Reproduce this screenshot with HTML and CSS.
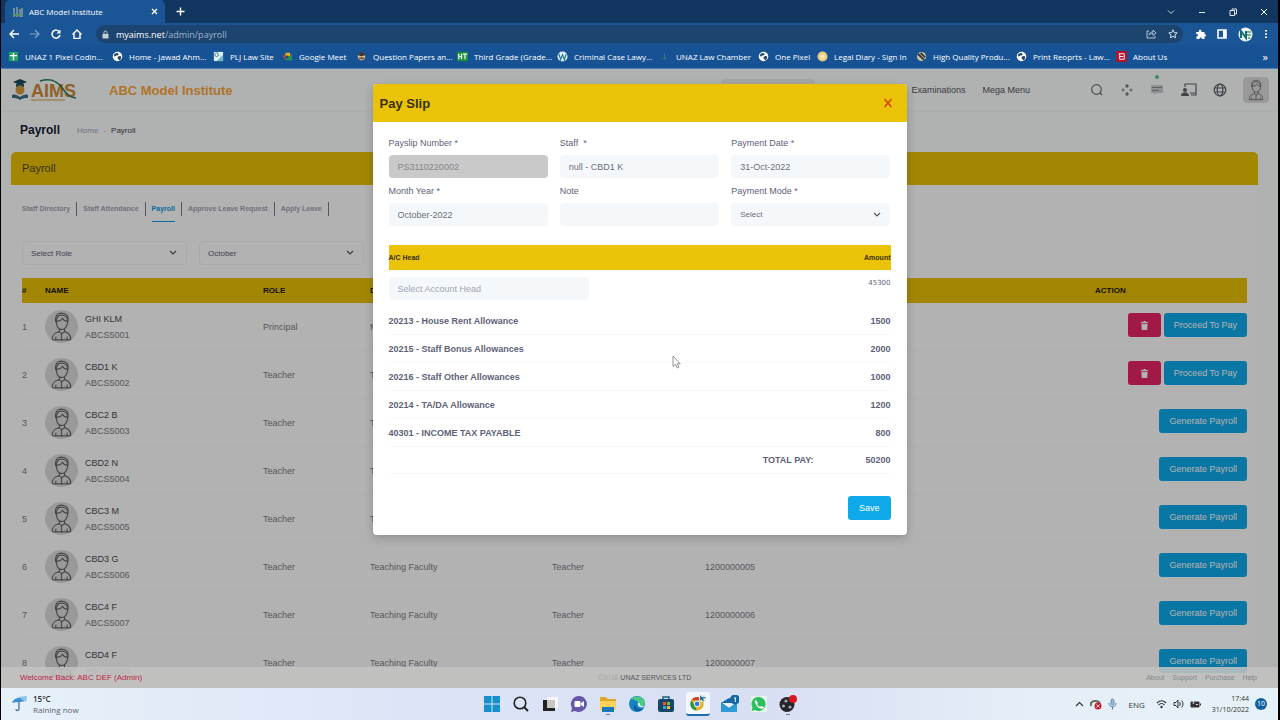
FILE: index.html
```html
<!DOCTYPE html>
<html lang="en">
  <head>
    <meta charset="utf-8">
    <title>ABC Model Institute</title>
    <link rel="stylesheet" href="styles.css">
  </head>
  <body>
    <svg class="defs" aria-hidden="true">
      <symbol id="person" viewBox="0 0 32 32">
        <g fill="none" stroke="#666" stroke-width="1.100" stroke-linejoin="round">
          <path d="M11 11c0-4 2-6 5-6s6 2 6 6c0 5-3 8-6 8s-5-3-5-8z"/>
          <path d="M10.500 12c-1.500-5 1-9 5.500-9s7.500 3 6 9M11 11c3 0 5-1 6-3 1 2 3 3 5 3"/>
          <path d="M14 18v3l2 2 3-2v-3M7 29c0-5 2-7 7-8M25 29c0-5-2-7-6-8M7 29h18M16 23v6M10.500 29v-3M21.500 29v-3"/>
        </g>
      </symbol>
      <symbol id="trash" viewBox="0 0 10 10">
        <path fill="#fff" d="M1 1h2.500l.5-1h2l.5 1h2.500v1.200h-8zM1.500 3h7l-.5 7h-6z"/>
      </symbol>
      <symbol id="globe" viewBox="0 0 12 12">
        <circle cx="6" cy="6" r="5.200" fill="#fff"/>
        <path fill="#24466e" d="M3 3c2-1 3-1 4 0s-1 2-2 2-1 1-2 1-1-2 0-3zM7 6c2-1 3 0 3 1s-1 3-2 3-1-2-2-2 0-1 1-2z"/>
      </symbol>
    </svg>

    <header class="browser">
      <div class="tabstrip">
        <div class="tab">
          <svg width="12" height="12" viewBox="0 0 12 12"><path d="M2 2v9M5 1v10M8 3v8M10 2v9" stroke="#8c9aa0" stroke-width="1.500"/><path d="M1 9h10" stroke="#5c8f6b" stroke-width="2"/></svg>
          <span>ABC Model Institute</span>
          <button class="plain" aria-label="Close tab"><svg width="7" height="7" viewBox="0 0 7 7"><path d="M1 1l5 5M6 1l-5 5" stroke="#fff" stroke-width="1.300"/></svg></button>
        </div>
        <button class="plain" aria-label="New tab"><svg width="9" height="9" viewBox="0 0 9 9"><path d="M4.500 0.500v8M0.500 4.500h8" stroke="#fff" stroke-width="1.400"/></svg></button>
        <div class="window-buttons">
          <button class="plain" aria-label="Search tabs"><svg width="8" height="8" viewBox="0 0 8 8"><path d="M1 2.500l3 3 3-3" fill="none" stroke="#c3d3e4"/></svg></button>
          <button class="plain" aria-label="Minimize"><svg width="8" height="8" viewBox="0 0 8 8"><path d="M1 4.500h6" stroke="#dfe8f2"/></svg></button>
          <button class="plain" aria-label="Restore"><svg width="8" height="8" viewBox="0 0 8 8"><path d="M1 2.500h4.500v5h-4.500zM3 2.500v-1.500h4.500v5h-2" fill="none" stroke="#dfe8f2"/></svg></button>
          <button class="plain" aria-label="Close"><svg width="8" height="8" viewBox="0 0 8 8"><path d="M1 1l6 6M7 1l-6 6" stroke="#fff"/></svg></button>
        </div>
      </div>

      <div class="toolbar">
        <div class="nav-buttons">
          <button class="plain" aria-label="Back"><svg width="10" height="10" viewBox="0 0 10 10"><path d="M5 1l-4 4 4 4M1 5h9" fill="none" stroke="#fff" stroke-width="1.400"/></svg></button>
          <button class="plain" aria-label="Forward"><svg width="10" height="10" viewBox="0 0 10 10"><path d="M5 1l4 4-4 4M9 5h-9" fill="none" stroke="#7fa5cf" stroke-width="1.200"/></svg></button>
          <button class="plain" aria-label="Reload"><svg width="10" height="10" viewBox="0 0 10 10"><path d="M8.500 3a4 4 0 1 0 .5 3" fill="none" stroke="#fff" stroke-width="1.500"/><path d="M9.500 0.500v4h-4z" fill="#fff"/></svg></button>
          <button class="plain" aria-label="Home"><svg width="10" height="10" viewBox="0 0 10 10"><path d="M0.500 5.500L5 1l4.500 4.500M2 4.500v5h6v-5" fill="none" stroke="#fff" stroke-width="1.400"/></svg></button>
        </div>
        <div class="omnibox">
          <svg width="7" height="9" viewBox="0 0 7 9"><path d="M0.500 4h6v4.500h-6z" fill="#c4cfdc"/><path d="M2 4v-1.500a1.500 1.500 0 0 1 3 0v1.500" fill="none" stroke="#c4cfdc"/></svg>
          <span class="url">myaims.net<span>/admin/payroll</span></span>
          <svg width="11" height="10" viewBox="0 0 11 10"><path d="M3 2h-2v7h8v-2M3 6c0-2 2-3 4-3v-2l3 3-3 2.500v-2c-2 0-3 .5-4 1.500z" fill="none" stroke="#b5c5d8"/></svg>
          <svg width="10" height="10" viewBox="0 0 10 10"><path d="M5 .8l1.200 2.800 3 .3-2.300 2 .7 3-2.600-1.600-2.600 1.600.7-3-2.300-2 3-.3z" fill="none" stroke="#d5deea"/></svg>
        </div>
        <div class="extensions">
          <svg width="10" height="10" viewBox="0 0 10 10"><path d="M0 3h3c-.8-3 3-3 2.500 0h3v2.300c2-.5 2 2.700 0 2.300v2.400h-2.700c.4-2-2.600-2-2.200 0h-3.100v-2.500c2 .3 2-2.600 0-2.200z" fill="#fff"/></svg>
          <svg width="10" height="10" viewBox="0 0 10 10"><path d="M1 1h8v8h-8z" fill="none" stroke="#fff" stroke-width="1.600"/><path d="M6 1h3v8h-3z" fill="#fff"/></svg>
          <svg width="15" height="15" viewBox="0 0 15 15"><circle cx="7.500" cy="7.500" r="7" fill="#e8f3f1"/><path d="M3 11v-7l5 7v-7" fill="none" stroke="#176b78" stroke-width="2"/><path d="M9 5h4M9 8h4M10 11h2" stroke="#4d9c66" stroke-width="1.500"/></svg>
          <svg width="4" height="10" viewBox="0 0 4 10"><path d="M1 1h2v1.500h-2zM1 4.300h2v1.500h-2zM1 7.500h2v1.500h-2z" fill="#fff"/></svg>
        </div>
      </div>

      <nav class="bookmarks">
        <a href="#"><svg viewBox="0 0 12 12"><path d="M1 1h10v10h-10z" fill="#1fa363"/><path d="M6 2v8M2 5h8" stroke="#fff" stroke-width="1.500"/></svg>UNAZ 1 Pixel Codin...</a>
        <a href="#"><svg><use href="#globe"/></svg>Home - Jawad Ahm...</a>
        <a href="#"><svg viewBox="0 0 12 12"><path d="M1 1h10v10h-10z" fill="#e4f2f5"/><circle cx="4" cy="4" r="2" fill="none" stroke="#29798f"/><path d="M4 11l7-7v7z" fill="#71bbc9"/></svg>PLJ Law Site</a>
        <a href="#"><svg viewBox="0 0 12 12"><path d="M1 6l3-4v8z" fill="#c8442e"/><path d="M4 2h5v4h-5z" fill="#e2b52a"/><path d="M4 6h5l2-3v7h-7z" fill="#259350"/><path d="M4 5h3v3h-3z" fill="#175394"/></svg>Google Meet</a>
        <a href="#"><svg viewBox="0 0 12 12"><circle cx="6" cy="6" r="4" fill="#d8c9a4"/><path d="M1 4l5-3 5 3-5 2z" fill="#3b3a38"/><path d="M3 8h6" stroke="#6d4f2e" stroke-width="2"/></svg>Question Papers an...</a>
        <a href="#"><svg viewBox="0 0 12 12"><path d="M0 1h12v10h-12z" fill="#18913b"/><path d="M2 3v6M5 3v6M2 6h3M6.500 3.500h4.500M8.700 3v6" stroke="#fff" stroke-width="1.300"/></svg>Third Grade (Grade...</a>
        <a href="#"><svg viewBox="0 0 12 12"><circle cx="6" cy="6" r="5.500" fill="#dff1f4"/><path d="M2 3l2 6.500 2-5.500 2 5.500 2-6" fill="none" stroke="#287694" stroke-width="1.300"/></svg>Criminal Case Lawy...</a>
        <a href="#"><svg viewBox="0 0 12 12"><path d="M6 3v6M4 8h4" stroke="#496f86"/></svg>UNAZ Law Chamber</a>
        <a href="#"><svg><use href="#globe"/></svg>One Pixel</a>
        <a href="#"><svg viewBox="0 0 12 12"><circle cx="6" cy="6" r="5.500" fill="#eccd7c"/><circle cx="6" cy="6" r="2.500" fill="#f7e9bc"/></svg>Legal Diary - Sign In</a>
        <a href="#"><svg viewBox="0 0 12 12"><circle cx="6" cy="6" r="5" fill="#c7c0a7"/><path d="M2 3l7 7M5 2l5 5" stroke="#33383b" stroke-width="2"/></svg>High Quality Produ...</a>
        <a href="#"><svg><use href="#globe"/></svg>Print Reoprts - Law...</a>
        <a href="#"><svg viewBox="0 0 12 12"><path d="M0 0h12v12h-12z" fill="#b3122c"/><path d="M3 3h6v6M4 9v-6M4 6h4M4 9h5" fill="none" stroke="#fff"/></svg>About Us</a>
        <span class="more">»</span>
      </nav>
    </header>

    <div class="viewport">
      <header class="site-header">
        <svg class="logo" width="68" height="24" viewBox="0 0 68 24">
          <path d="M2 4l7-3 7 3-7 3z" fill="#184b58"/><path d="M5 6v3h8v-3" fill="#235f6b"/>
          <circle cx="9" cy="12" r="4.500" fill="#d69a3c"/>
          <path d="M1 17c3-1 5 0 8 2 3-2 5-3 8-2v3c-3 0-5 0-8 2-3-2-5-2-8-2z" fill="#3d6f86"/>
          <text x="20" y="19" class="logo-text">AIMS</text>
          <path d="M29 3c13-4 19 2 23 8s7 8 13 9" fill="none" stroke="#2f7d52" stroke-width="1.500"/>
          <path d="M20 22h34" stroke="#d6a04a"/>
        </svg>
        <a class="school" href="#">ABC Model Institute</a>
        <nav class="main-menu">
          <a class="current" href="#">Human Resource</a>
          <a href="#">Communication</a>
          <a href="#">Examinations</a>
          <a href="#">Mega Menu</a>
        </nav>
        <div class="tools">
          <button class="plain" aria-label="Search"><svg width="14" height="14" viewBox="0 0 14 14"><circle cx="6.500" cy="6.500" r="4.800" fill="none" stroke="#6e7178" stroke-width="1.200"/><path d="M10 10l2 2" stroke="#6e7178" stroke-width="1.200"/></svg></button>
          <button class="plain" aria-label="Apps"><svg width="14" height="14" viewBox="0 0 14 14" fill="#777b83"><circle cx="7" cy="3" r="1.700"/><circle cx="7" cy="11" r="1.700"/><circle cx="3" cy="7" r="1.500" fill="#9b9ea6"/><circle cx="11" cy="7" r="1.500" fill="#9b9ea6"/></svg></button>
          <button class="plain notices" aria-label="Notices"><svg width="14" height="14" viewBox="0 0 14 14"><path d="M1 2h12v8h-7l-2 2v-2h-3z" fill="#cdced3"/><path d="M2 4.500h10M2 7.500h7" stroke="#85888f"/></svg></button>
          <button class="plain" aria-label="Classroom"><svg width="17" height="14" viewBox="0 0 17 14"><path d="M5 4v-3h11v9h-6M11 12h5v-3" fill="none" stroke="#60636c" stroke-width="1.200"/><circle cx="5" cy="7" r="2" fill="#60636c"/><path d="M1 13c0-5 8-5 8 0z" fill="#60636c"/></svg></button>
          <button class="plain" aria-label="Language"><svg width="14" height="14" viewBox="0 0 14 14"><g fill="none" stroke="#60636c" stroke-width="1.200"><circle cx="7" cy="7" r="5.800"/><ellipse cx="7" cy="7" rx="2.800" ry="5.800"/><path d="M1.500 5h11M1.500 9h11"/></g></svg></button>
          <button class="plain profile" aria-label="Profile"><svg width="24" height="24"><use href="#person"/></svg></button>
        </div>
      </header>

      <main>
        <div class="page-title">
          <h1>Payroll</h1>
          <a href="#">Home</a>
          <span class="dash">-</span>
          <span>Payroll</span>
        </div>

        <section class="card">
          <h2>Payroll</h2>
          <div class="card-body">
            <ul class="tabs">
              <li><a href="#">Staff Directory</a></li>
              <li><a href="#">Staff Attendance</a></li>
              <li><a class="active" href="#">Payroll</a></li>
              <li><a href="#">Approve Leave Request</a></li>
              <li><a href="#">Apply Leave</a></li>
            </ul>
            <form class="filters">
              <select aria-label="Role"><option>Select Role</option></select>
              <select aria-label="Month"><option>October</option></select>
            </form>
            <table class="staff">
              <thead>
                <tr>
                  <th class="col-no">#</th>
                  <th class="col-name">NAME</th>
                  <th class="col-role">ROLE</th>
                  <th class="col-dept">DEPARTMENT</th>
                  <th class="col-desig">DESIGNATION</th>
                  <th>PHONE</th>
                  <th class="col-action">ACTION</th>
                </tr>
              </thead>
              <tbody>
                <tr>
                  <td>1</td>
                  <td><div class="person"><svg><use href="#person"/></svg><div><b>GHI KLM</b><span>ABCS5001</span></div></div></td>
                  <td>Principal</td><td>Management</td><td>Principal</td><td>1200000000</td>
                  <td class="actions"><button class="btn danger" aria-label="Delete"><svg width="9" height="9"><use href="#trash"/></svg></button> <button class="btn">Proceed To Pay</button></td>
                </tr>
                <tr>
                  <td>2</td>
                  <td><div class="person"><svg><use href="#person"/></svg><div><b>CBD1 K</b><span>ABCS5002</span></div></div></td>
                  <td>Teacher</td><td>Teaching Faculty</td><td>Teacher</td><td>1200000001</td>
                  <td class="actions"><button class="btn danger" aria-label="Delete"><svg width="9" height="9"><use href="#trash"/></svg></button> <button class="btn">Proceed To Pay</button></td>
                </tr>
                <tr>
                  <td>3</td>
                  <td><div class="person"><svg><use href="#person"/></svg><div><b>CBC2 B</b><span>ABCS5003</span></div></div></td>
                  <td>Teacher</td><td>Teaching Faculty</td><td>Teacher</td><td>1200000002</td>
                  <td class="actions"><button class="btn">Generate Payroll</button></td>
                </tr>
                <tr>
                  <td>4</td>
                  <td><div class="person"><svg><use href="#person"/></svg><div><b>CBD2 N</b><span>ABCS5004</span></div></div></td>
                  <td>Teacher</td><td>Teaching Faculty</td><td>Teacher</td><td>1200000003</td>
                  <td class="actions"><button class="btn">Generate Payroll</button></td>
                </tr>
                <tr>
                  <td>5</td>
                  <td><div class="person"><svg><use href="#person"/></svg><div><b>CBC3 M</b><span>ABCS5005</span></div></div></td>
                  <td>Teacher</td><td>Teaching Faculty</td><td>Teacher</td><td>1200000004</td>
                  <td class="actions"><button class="btn">Generate Payroll</button></td>
                </tr>
                <tr>
                  <td>6</td>
                  <td><div class="person"><svg><use href="#person"/></svg><div><b>CBD3 G</b><span>ABCS5006</span></div></div></td>
                  <td>Teacher</td><td>Teaching Faculty</td><td>Teacher</td><td>1200000005</td>
                  <td class="actions"><button class="btn">Generate Payroll</button></td>
                </tr>
                <tr>
                  <td>7</td>
                  <td><div class="person"><svg><use href="#person"/></svg><div><b>CBC4 F</b><span>ABCS5007</span></div></div></td>
                  <td>Teacher</td><td>Teaching Faculty</td><td>Teacher</td><td>1200000006</td>
                  <td class="actions"><button class="btn">Generate Payroll</button></td>
                </tr>
                <tr>
                  <td>8</td>
                  <td><div class="person"><svg><use href="#person"/></svg><div><b>CBD4 F</b><span>ABCS5008</span></div></div></td>
                  <td>Teacher</td><td>Teaching Faculty</td><td>Teacher</td><td>1200000007</td>
                  <td class="actions"><button class="btn">Generate Payroll</button></td>
                </tr>
              </tbody>
            </table>
          </div>
        </section>
      </main>

      <div class="backdrop">
        <div class="modal" role="dialog" aria-labelledby="slip-title">
          <div class="modal-header">
            <h2 id="slip-title">Pay Slip</h2>
            <button class="plain" aria-label="Close"><svg width="10" height="10" viewBox="0 0 10 10"><path d="M1.500 1l7 8M8.500 1l-7 8" stroke="#d8420f" stroke-width="1.500"/></svg></button>
          </div>
          <form class="modal-body">
            <div class="fields">
              <div class="field"><label for="slip-no">Payslip Number <i>*</i></label><input id="slip-no" value="PS3110220002" readonly></div>
              <div class="field"><label for="staff">Staff &nbsp;<i>*</i></label><input id="staff" value="null - CBD1 K"></div>
              <div class="field"><label for="pay-date">Payment Date <i>*</i></label><input id="pay-date" value="31-Oct-2022"></div>
              <div class="field"><label for="month">Month Year <i>*</i></label><input id="month" value="October-2022"></div>
              <div class="field"><label for="note">Note</label><input id="note"></div>
              <div class="field"><label for="mode">Payment Mode <i>*</i></label><select id="mode"><option>Select</option></select></div>
            </div>
            <table class="heads">
              <thead>
                <tr><th>A/C Head</th><th class="amount">Amount</th></tr>
              </thead>
              <tbody>
                <tr class="add"><td><input aria-label="Account head" placeholder="Select Account Head"></td><td>45300</td></tr>
                <tr><td>20213 - House Rent Allowance</td><td>1500</td></tr>
                <tr><td>20215 - Staff Bonus Allowances</td><td>2000</td></tr>
                <tr><td>20216 - Staff Other Allowances</td><td>1000</td></tr>
                <tr><td>20214 - TA/DA Allowance</td><td>1200</td></tr>
                <tr><td>40301 - INCOME TAX PAYABLE</td><td>800</td></tr>
              </tbody>
              <tfoot>
                <tr><td>TOTAL PAY:</td><td>50200</td></tr>
              </tfoot>
            </table>
            <button class="btn save" type="button">Save</button>
          </form>
        </div>
      </div>

      <footer class="site-footer">
        <span class="welcome">Welcome Back: ABC DEF (Admin)</span>
        <span class="copy"><span>©2018</span> UNAZ SERVICES LTD</span>
        <nav><a href="#">About</a><a href="#">Support</a><a href="#">Purchase</a><a href="#">Help</a></nav>
      </footer>

      <svg class="cursor" width="9" height="14" viewBox="0 0 9 14"><path d="M1 1v10.500l2.500-2.200 1.700 3.700 1.700-.8-1.700-3.500h3z" fill="#fff" stroke="#777" stroke-width=".8"/></svg>
    </div>

    <footer class="taskbar">
      <div class="weather">
        <svg width="16" height="18" viewBox="0 0 16 18"><path d="M0 8c1-5 10-8 15-3-3 1-5 2-7 2s-5 0-8 1z" fill="#3f8fd2"/><path d="M6 2l9-1-1 6z" fill="#8cc3ea"/><path d="M7 6v8c0 2-3 2-3 0" fill="none" stroke="#47729b" stroke-width="1.300"/></svg>
        <div><b>15°C</b><span>Raining now</span></div>
      </div>
      <div class="apps">
        <svg viewBox="0 0 18 18"><path d="M1 1h7.500v7.500h-7.500zM9.500 1h7.500v7.500h-7.500zM1 9.500h7.500v7.500h-7.500zM9.500 9.500h7.500v7.500h-7.500z" fill="#168fcb"/></svg>
        <svg viewBox="0 0 18 18"><circle cx="8" cy="8" r="5.800" fill="none" stroke="#222" stroke-width="1.600"/><path d="M12 12l4 4" stroke="#222" stroke-width="2"/></svg>
        <svg viewBox="0 0 18 18"><path d="M6 2h11v11h-11z" fill="#f6f6f6"/><path d="M2 5h4v8h8v3h-12z" fill="#222"/><path d="M6 5h8v8h-8z" fill="#c6c6c6"/></svg>
        <svg viewBox="0 0 18 18"><path d="M9 1a8 8 0 1 1-4 15l-4 1 1-4a8 8 0 0 1 7-12z" fill="#6558a8"/><rect x="4.500" y="6" width="6" height="6" rx="1" fill="#fff"/><path d="M11 8l3-2v6l-3-2z" fill="#fff"/></svg>
        <svg class="running" viewBox="0 0 18 18"><path d="M1 2h6l2 2h8v11h-16z" fill="#e0a72d"/><path d="M1 6h16v9h-16z" fill="#f9d25a"/><path d="M3 12h12v5h-12z" fill="#1878be"/></svg>
        <svg viewBox="0 0 18 18"><circle cx="9" cy="9" r="8" fill="#1684c3"/><path d="M3 4c5-5 14-2 14 4 0 4-5 4-7 3 2-3-1-6-7-7z" fill="#4bcb87"/><path d="M8 8c-2 3 1 7 7 6-4 4-11 2-9-3z" fill="#0f5ca3"/><path d="M10 8c-1 3 2 5 6 4l1-1c-4 1-6-1-5-3z" fill="#e8f4f8"/></svg>
        <svg viewBox="0 0 18 18"><path d="M6 4v-2h6v2" fill="none" stroke="#1d5d7e" stroke-width="1.500"/><rect x="1" y="4" width="16" height="13" rx="2" fill="#174767"/><path d="M6 7h3v3h-3z" fill="#e75735"/><path d="M10 7h3v3h-3z" fill="#7bbd3c"/><path d="M6 11h3v3h-3z" fill="#33a3dc"/><path d="M10 11h3v3h-3z" fill="#f2bf33"/></svg>
        <svg class="focused" viewBox="0 0 18 18"><circle cx="8" cy="10" r="7.500" fill="#e5b52d"/><path d="M1.500 6a7.500 7.500 0 0 1 13 0h-6.500z" fill="#d43d31"/><path d="M1.500 6l4 6 2 5.500a7.500 7.500 0 0 1-6-11.500z" fill="#279750"/><circle cx="8" cy="10" r="3.500" fill="#fff"/><circle cx="8" cy="10" r="2.600" fill="#3279c9"/><circle cx="14" cy="4" r="4" fill="#d8eeee"/><path d="M12 6v-4l2.500 4v-4M15.500 3h2" fill="none" stroke="#125d71" stroke-width="1.200"/></svg>
        <svg viewBox="0 0 18 18"><path d="M0 8l8-5 8 5v9h-16z" fill="#1269aa"/><path d="M1 8h14l-7 5z" fill="#eaf5fb"/><path d="M0 8l8 5 8-5v9h-16z" fill="#2c9bd8"/><circle cx="14" cy="4.500" r="5" fill="#1468a0"/><path d="M13 3.500l1.300-1v4.500" fill="none" stroke="#fff"/></svg>
        <svg viewBox="0 0 18 18"><path d="M1 1h16v16h-16z" fill="#e6f5eb"/><path d="M9 2a7 7 0 1 1-4 13l-3.500 1 1-3.500a7 7 0 0 1 6.500-10.500z" fill="#2fbe5e"/><path d="M6 5l2 3-1 1c1 2 2 2 3 3l1-1 3 1c-1 3-5 2-7-1s-3-5-1-6z" fill="#fff"/></svg>
        <svg class="running" viewBox="0 0 18 18"><circle cx="8" cy="9.500" r="7.500" fill="#24252a"/><circle cx="7" cy="6" r="1.600" fill="#a9a9ad"/><circle cx="4.500" cy="11" r="1.600" fill="#a9a9ad"/><circle cx="11" cy="12" r="1.600" fill="#a9a9ad"/><circle cx="14" cy="4" r="4" fill="#dd1420"/></svg>
      </div>
      <div class="tray">
        <svg width="9" height="9" viewBox="0 0 9 9"><path d="M1 6l3.500-3.500L8 6" fill="none" stroke="#333" stroke-width="1.200"/></svg>
        <svg width="12" height="12" viewBox="0 0 12 12"><path d="M1 8c-1-3 1-5 4-5s5 1 5 4" fill="none" stroke="#666" stroke-width="2"/><circle cx="8" cy="8" r="3.500" fill="#c9202e"/><path d="M6.500 6.500l3 3M9.500 6.500l-3 3" stroke="#fff" stroke-width=".8"/></svg>
        <svg width="9" height="12" viewBox="0 0 9 12"><rect x="3" y="1" width="3" height="6" rx="1.500" fill="#9cb8dc" stroke="#58779f" stroke-width=".8"/><path d="M1 5c0 5 7 5 7 0M4.500 9v2.500" fill="none" stroke="#58779f"/></svg>
        <span class="lang">ENG</span>
        <svg width="11" height="10" viewBox="0 0 11 10"><path d="M1 4c3-3 6-3 9 0M2.500 6c2-2 4-2 6 0" fill="none" stroke="#333" stroke-width="1.100"/><circle cx="5.500" cy="8" r="1.200" fill="#333"/></svg>
        <svg width="11" height="10" viewBox="0 0 11 10"><path d="M1 3.500h2l2-2.500v8l-2-2.500h-2zM6.500 3c1 1 1 3 0 4M8.500 1.500c2 2 2 5 0 7" fill="none" stroke="#333"/></svg>
        <svg width="11" height="10" viewBox="0 0 11 10"><path d="M1 3h8v5h-8zM10.500 4.500v2" fill="#333" stroke="#333"/><path d="M1 1l3 2-1 2M6 5.500h2" stroke="#dfe8f2" fill="none"/></svg>
        <div class="clock"><span>17:44</span><span>31/10/2022</span></div>
        <span class="count">10</span>
      </div>
    </footer>
  </body>
</html>
```
FILE: styles.css
```css
*{
    box-sizing: border-box;
}
body{
    display: flex;
    flex-direction: column;
    height: 100vh;
    margin: 0;
    border-left: 1px solid #000;
    border-right: 2px solid #000;
    font-family: "Liberation Sans", Arial, sans-serif;
    font-size: 9px;
    overflow: hidden;
}
a{
    color: inherit;
    text-decoration: none;
}
h1, h2{
    margin: 0;
}
svg{
    flex: none;
}
button, input, select{
    font: inherit;
}
.defs{
    position: absolute;
    width: 0;
    height: 0;
}
.plain{
    display: flex;
    padding: 0;
    border: 0;
    background: none;
}

/* browser window */
.browser{
    flex: none;
    color: #fff;
    font-family: "Open Sans", "Noto Sans", sans-serif;
    background: #175394;
}
.tabstrip{
    display: flex;
    align-items: center;
    gap: 11px;
    height: 23px;
    padding-left: 4px;
    background: #12365f;
}
.tab{
    display: flex;
    align-items: center;
    gap: 5px;
    width: 160px;
    height: 23px;
    padding: 0 7px;
    border-radius: 5px 5px 0 0;
    font-size: 8px;
    background: #1a5596;
}
.tab span{
    flex: 1;
}
.window-buttons{
    display: flex;
    gap: 23px;
    margin-left: auto;
    padding-right: 10px;
}
.toolbar{
    display: flex;
    align-items: center;
    height: 22px;
    padding: 0 10px 0 8px;
    background: #1a5596;
}
.nav-buttons{
    display: flex;
    gap: 11px;
}
.omnibox{
    display: flex;
    flex: 1;
    align-items: center;
    gap: 11px;
    height: 18px;
    margin: 0 13px 0 14px;
    padding: 0 5px 0 6px;
    border-radius: 9px;
    background: #1d446f;
}
.url{
    flex: 1;
    margin-left: -4px;
    font-size: 9px;
}
.url span{
    color: #9fb4cc;
}
.extensions{
    display: flex;
    align-items: center;
    gap: 11px;
}
.bookmarks{
    display: grid;
    grid-template-columns: 104px 101px 69px 74px 101px 100px 102px 99px 59px 99px 100px 100px 1fr auto;
    align-items: center;
    height: 24px;
    padding: 0 10px 0 7px;
    font-size: 8px;
    white-space: nowrap;
    border-bottom: 1px solid #4f80b3;
}
.bookmarks a{
    display: flex;
    align-items: center;
    gap: 6px;
}
.bookmarks svg{
    width: 11px;
    height: 11px;
}
.more{
    font-size: 11px;
}

/* payroll page */
.viewport{
    position: relative;
    flex: 1;
    min-height: 0;
    overflow: hidden;
    color: #7b7d87;
    background: #fcfefe;
}
.site-header{
    display: flex;
    align-items: center;
    height: 43px;
    padding: 0 9px 0 10px;
    border-bottom: 1px solid #f6f6f6;
}
.logo-text{
    font-size: 18px;
    font-weight: bold;
    fill: #cf8a35;
}
.school{
    margin-left: 30px;
    font-size: 13px;
    font-weight: bold;
    color: #fca63a;
}
.main-menu{
    display: flex;
    align-items: center;
    gap: 17px;
    margin-left: auto;
    color: #54565e;
}
.main-menu .current{
    padding: 6px 12px;
    border-radius: 4px;
    background: #eee;
}
.tools{
    display: flex;
    align-items: center;
    gap: 16px;
    margin-left: 60px;
}
.notices{
    position: relative;
}
.notices::after{
    content: "";
    position: absolute;
    top: -8px;
    left: 5px;
    width: 4px;
    height: 4px;
    border-radius: 50%;
    background: #50cd89;
}
.profile{
    justify-content: center;
    width: 26px;
    padding: 1px 0;
    border-radius: 4px;
    background: #dcdcdc;
}
.page-title{
    display: flex;
    align-items: center;
    gap: 5px;
    height: 40px;
    padding: 0 19px 4px;
    font-size: 8px;
    color: #44464e;
}
.page-title h1{
    margin-right: 12px;
    font-size: 12px;
    color: #181c32;
}
.page-title a,
.dash{
    color: #a1a5b7;
}
.card{
    margin: 0 20px 0 10px;
    border-radius: 5px 5px 0 0;
    background: #fff;
    overflow: hidden;
}
.card h2{
    height: 33px;
    padding-left: 11px;
    font-size: 11px;
    font-weight: normal;
    line-height: 33px;
    color: #4d4420;
    background: #eac207;
}
.card-body{
    padding: 10px 11px;
}
.tabs{
    display: flex;
    gap: 6px;
    margin: 0;
    padding: 0;
    list-style: none;
    font-size: 7px;
    font-weight: bold;
    color: #a1a5b7;
}
.tabs li{
    display: flex;
    align-items: center;
    gap: 6px;
}
.tabs li::after{
    content: "";
    width: 1px;
    height: 14px;
    background: #7c7e86;
}
.tabs a{
    height: 27px;
    line-height: 27px;
    border-bottom: 1px solid transparent;
}
.tabs .active{
    color: #0f9be0;
    border-color: #0f9be0;
}
.filters{
    display: flex;
    gap: 12px;
    margin: 19px 0 13px;
}
select{
    appearance: none;
    padding: 0 9px;
    border: 1px solid #f2f2f4;
    border-radius: 4px;
    font-size: 8px;
    color: #5e6278;
    background: #fff url("data:image/svg+xml,%3Csvg xmlns='http://www.w3.org/2000/svg' width='8' height='6'%3E%3Cpath d='M1 1l3 3 3-3' fill='none' stroke='%23555' stroke-width='1.2'/%3E%3C/svg%3E") no-repeat right 9px center;
}
.filters select{
    flex: 0 1 165px;
    height: 24px;
    padding: 0 8px;
}
table{
    width: 100%;
    border-spacing: 0;
}
.staff{
    table-layout: fixed;
}
th,
td{
    padding: 0;
    text-align: left;
}
.staff th{
    height: 25px;
    font-size: 8px;
    color: #181507;
    background: #eac207;
}
.staff td{
    height: 48px;
    border-bottom: 1px solid #fafafa;
}
.col-no{
    width: 23px;
}
.col-name{
    width: 218px;
}
.col-role{
    width: 107px;
}
.col-dept{
    width: 182px;
}
.col-desig{
    width: 153px;
}
.col-action{
    width: 152px;
}
.person{
    display: flex;
    align-items: center;
    gap: 7px;
}
.person svg{
    width: 33px;
    height: 33px;
    border-radius: 50%;
    background: #dcdcdc;
}
.person b,
.person span{
    display: block;
    line-height: 16px;
}
.person b{
    font-weight: normal;
    color: #4a4c55;
}
.staff .actions{
    padding-top: 10px;
    text-align: right;
    vertical-align: top;
    white-space: nowrap;
}
.btn{
    height: 24px;
    padding: 0 10px;
    border: 0;
    border-radius: 3px;
    color: #fff;
    vertical-align: top;
    background: #0fa9ea;
}
.danger{
    padding: 0 12px;
    background: #e72565;
}
.danger svg{
    vertical-align: middle;
}

/* pay slip dialog */
.backdrop{
    position: absolute;
    inset: 0;
    padding-top: 15px;
    background: rgba(0, 0, 0, .3);
}
.modal{
    max-width: 534px;
    margin: 0 auto;
    border-radius: 4px;
    background: #fff;
    box-shadow: 0 3px 10px rgba(0, 0, 0, .2);
    overflow: hidden;
}
.modal-header{
    display: flex;
    align-items: center;
    justify-content: space-between;
    height: 38px;
    padding: 0 14px 0 7px;
    background: #eac207;
}
.modal-header h2{
    font-size: 13px;
    color: #3a300a;
}
.modal-body{
    display: flex;
    flex-direction: column;
    padding: 14px 16px 15px;
    color: #5e6278;
}
.fields{
    display: grid;
    grid-template-columns: repeat(3, 1fr);
    gap: 6px 12px;
}
.field{
    display: flex;
    flex-direction: column;
    gap: 5px;
}
.field label{
    line-height: 14px;
}
.field i{
    font-style: normal;
}
.modal input,
.modal select{
    height: 23px;
    padding: 0 9px;
    border: 0;
    border-radius: 4px;
    color: #6b6e7c;
    background-color: #f5f8fa;
}
.modal input:read-only{
    color: #85868c;
    background: #c9c9c9;
}
.modal input::placeholder{
    color: #a1a5b7;
}
.heads{
    margin: 19px 0 22px;
    font-weight: bold;
}
.heads th{
    height: 25px;
    font-size: 7px;
    color: #3a300a;
    background: #eac207;
}
.heads td{
    height: 28px;
    border-bottom: 1px solid #f8f9fa;
}
.heads th:last-child,
.heads td:last-child{
    text-align: right;
}
.amount{
    width: 77px;
}
.heads .add td{
    height: 37px;
    border: 0;
    font-weight: normal;
}
.heads .add td:last-child{
    padding-top: 9px;
    font-family: "DejaVu Sans", sans-serif;
    font-size: 7px;
    vertical-align: top;
}
.add input{
    width: 200px;
}
.heads tfoot td{
    height: 27px;
    text-align: right;
}
.save{
    align-self: flex-end;
    padding: 0 11px;
}

.site-footer{
    position: absolute;
    right: 0;
    bottom: 0;
    left: 0;
    display: grid;
    grid-template-columns: 1fr auto 1fr;
    align-items: center;
    height: 21px;
    padding: 0 21px 0 19px;
    font-size: 7px;
    color: #55565c;
    background: rgba(194, 193, 192, .88);
}
.welcome{
    font-size: 8px;
    color: #bd2447;
}
.copy{
    padding-left: 12px;
}
.copy span{
    color: #a9a9a9;
}
.site-footer nav{
    display: flex;
    justify-content: flex-end;
    gap: 8px;
    color: #85868c;
}
.cursor{
    position: absolute;
    top: 286px;
    left: 671px;
}

/* windows taskbar */
.taskbar{
    display: grid;
    grid-template-columns: 1fr auto 1fr;
    align-items: center;
    flex: none;
    height: 32px;
    padding: 0 11px;
    font-family: "Open Sans", "Noto Sans", sans-serif;
    font-size: 8px;
    color: #333;
    background: linear-gradient(90deg, #e6f1f9, #dbe4f7 35%, #d9dff3 60%, #e4eef8 80%, #e6f1f8);
}
.weather{
    display: flex;
    align-items: center;
    gap: 5px;
    line-height: 11px;
}
.weather b,
.weather span,
.clock span{
    display: block;
}
.weather b{
    font-weight: 600;
}
.weather span{
    color: #5b6068;
}
.apps{
    display: flex;
    align-items: center;
    gap: 11px;
}
.apps svg{
    width: 18px;
    height: 18px;
}
.apps .focused{
    width: 24px;
    height: 24px;
    padding: 3px;
    border-radius: 3px;
    border-bottom: 2px solid #1e6fae;
    background: #f3f6fb;
}
.apps .running{
    height: 22px;
    padding: 2px 0;
    background: linear-gradient(#777, #777) no-repeat center bottom / 4px 1px;
}
.tray{
    display: flex;
    align-items: center;
    justify-content: flex-end;
    gap: 6px;
}
.lang{
    margin: 0 5px 0 6px;
}
.clock{
    margin-left: 5px;
    font-size: 7px;
    line-height: 11px;
    text-align: right;
}
.count{
    width: 12px;
    height: 12px;
    border-radius: 50%;
    font-size: 7px;
    line-height: 12px;
    text-align: center;
    color: #fff;
    background: #0f62a0;
}
```
